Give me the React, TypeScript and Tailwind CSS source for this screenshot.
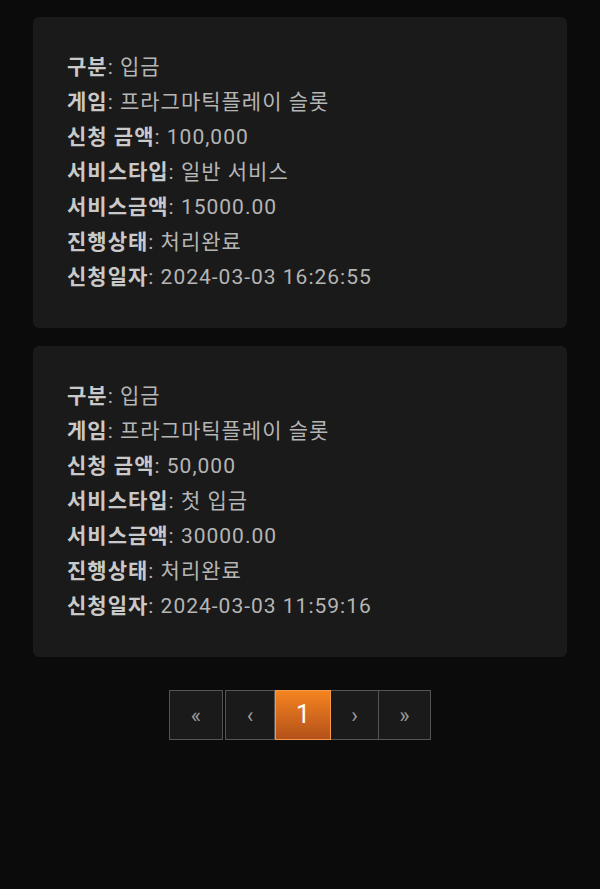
const records = [
  {
    type: "입금",
    game: "프라그마틱플레이 슬롯",
    amount: "100,000",
    serviceType: "일반 서비스",
    serviceAmount: "15000.00",
    status: "처리완료",
    date: "2024-03-03 16:26:55",
  },
  {
    type: "입금",
    game: "프라그마틱플레이 슬롯",
    amount: "50,000",
    serviceType: "첫 입금",
    serviceAmount: "30000.00",
    status: "처리완료",
    date: "2024-03-03 11:59:16",
  },
];

function Row({ label, value }: { label: string; value: string }) {
  return (
    <p className="leading-[35px] tracking-[1px]">
      <span className="font-bold text-[#c9c9c9]">{label}</span>
      <span className="text-[#b5b5b5]">: {value}</span>
    </p>
  );
}

export default function App() {
  return (
    <div
      className="min-h-[889px] bg-[#0b0b0b] px-[33px] pt-[17px] pb-[40px] text-[21px]"
      style={{ fontFamily: 'Roboto, "Noto Sans CJK KR", sans-serif' }}
    >
      <div className="flex flex-col gap-[18px]">
        {records.map((r, i) => (
          <div key={i} className="rounded-[6px] bg-[#1a1a1a] px-[34px] py-[33px]">
            <Row label="구분" value={r.type} />
            <Row label="게임" value={r.game} />
            <Row label="신청 금액" value={r.amount} />
            <Row label="서비스타입" value={r.serviceType} />
            <Row label="서비스금액" value={r.serviceAmount} />
            <Row label="진행상태" value={r.status} />
            <Row label="신청일자" value={r.date} />
          </div>
        ))}
      </div>

      <div className="mt-[33px] flex justify-center">
        <div className="flex h-[50px]">
          <button className="mr-[2px] flex w-[54px] items-center justify-center border border-[#555] bg-[#1a1a1a] text-[22px] text-[#9a9a9a]">
            «
          </button>
          <button className="flex w-[50px] items-center justify-center border border-[#555] bg-[#1a1a1a] text-[22px] text-[#9a9a9a]">
            ‹
          </button>
          <button className="flex w-[56px] items-center justify-center border border-[#f59a4a] bg-gradient-to-b from-[#f5841f] to-[#b4511a] text-[25px] text-white">
            1
          </button>
          <button className="flex w-[48px] items-center justify-center border border-l-0 border-[#555] bg-[#1a1a1a] text-[22px] text-[#9a9a9a]">
            ›
          </button>
          <button className="flex w-[52px] items-center justify-center border border-l-0 border-[#555] bg-[#1a1a1a] text-[22px] text-[#9a9a9a]">
            »
          </button>
        </div>
      </div>
    </div>
  );
}
